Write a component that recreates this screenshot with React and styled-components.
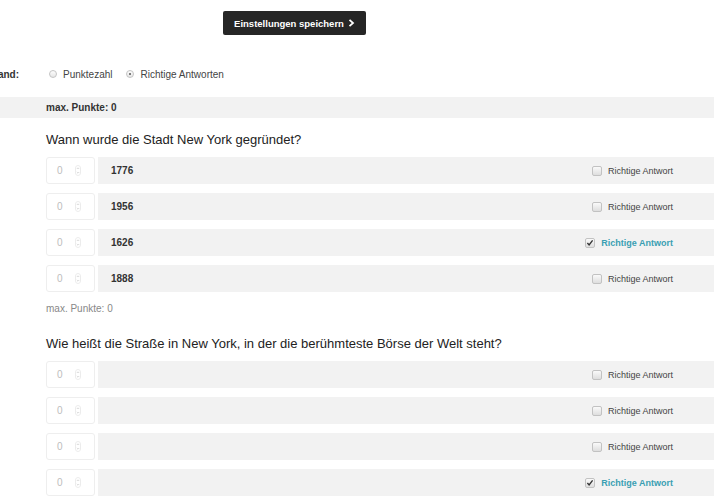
import React from "react";
import styled, { createGlobalStyle } from "styled-components";

const GlobalStyle = createGlobalStyle`
  body {
    margin: 0;
    background: #fff;
    font-family: "Liberation Sans", Arial, sans-serif;
    color: #333;
    overflow: hidden;
  }
`;

const questions = [
  {
    title: "Wann wurde die Stadt New York gegründet?",
    answers: [
      { text: "1776", correct: false },
      { text: "1956", correct: false },
      { text: "1626", correct: true },
      { text: "1888", correct: false },
    ],
  },
  {
    title: "Wie heißt die Straße in New York, in der die berühmteste Börse der Welt steht?",
    answers: [
      { text: "", correct: false },
      { text: "", correct: false },
      { text: "", correct: false },
      { text: "", correct: true },
    ],
  },
];

const Page = styled.div`
  width: 720px;
  height: 500px;
  padding-right: 6px;
  box-sizing: border-box;
  display: flex;
  flex-direction: column;
`;

const Toolbar = styled.div`
  padding: 11px 0 0 223px;
  display: flex;
`;

const SaveButton = styled.button`
  height: 24px;
  width: 143px;
  border: none;
  border-radius: 2px;
  background: #262626;
  color: #fff;
  font-family: "Liberation Sans", Arial, sans-serif;
  font-size: 9.5px;
  font-weight: bold;
  display: flex;
  align-items: center;
  justify-content: center;
  gap: 4px;
  padding: 0;
  cursor: pointer;
`;

const FieldRow = styled.div`
  margin-top: 29px;
  height: 20px;
  display: grid;
  grid-template-columns: 46px 1fr;
  align-items: center;
`;

// label column is cut by the left edge, as in the screenshot
const FieldLabel = styled.div`
  width: 19px;
  display: flex;
  justify-content: flex-end;
  font-size: 10px;
  font-weight: bold;
  color: #333;
  white-space: nowrap;
`;

const RadioGroup = styled.div`
  display: flex;
  align-items: center;
  padding-left: 3px;
  font-size: 10px;
  color: #444;
`;

const RadioOption = styled.label`
  display: flex;
  align-items: center;
  gap: 6px;
  margin-right: 14px;
`;

const RadioDot = styled.span`
  width: 6px;
  height: 6px;
  border-radius: 50%;
  border: 1px solid #c4c4c4;
  background: linear-gradient(#fdfdfd, #e6e6e6);
  display: flex;
  align-items: center;
  justify-content: center;

  &::after {
    content: "";
    width: 2px;
    height: 2px;
    border-radius: 50%;
    background: ${({ $checked }) => ($checked ? "#555" : "transparent")};
  }
`;

const PointsBar = styled.div`
  margin-top: 13px;
  height: 21px;
  background: #f2f2f2;
  padding-left: 46px;
  display: flex;
  align-items: center;
  font-size: 10px;
  font-weight: bold;
  color: #333;
`;

const Question = styled.section`
  padding-left: 46px;
  margin-top: ${({ $top }) => $top}px;
`;

const QuestionTitle = styled.h3`
  margin: 0 0 8px;
  height: 18px;
  line-height: 18px;
  font-size: 13px;
  font-weight: normal;
  color: #222;
  white-space: nowrap;
`;

const Answers = styled.div`
  display: flex;
  flex-direction: column;
  gap: 9px;
`;

const AnswerRow = styled.div`
  display: grid;
  grid-template-columns: 49px 1fr;
  gap: 3px;
  height: 27px;
`;

const PointsInput = styled.div`
  border: 1px solid #eeeeee;
  border-radius: 3px;
  display: flex;
  align-items: center;
  padding-left: 10px;
  gap: 12px;
  font-size: 10px;
  color: #bdbdbd;
`;

const AnswerField = styled.div`
  background: #f2f2f2;
  display: flex;
  align-items: center;
  justify-content: space-between;
  padding: 0 41px 0 13px;
  font-size: 10px;
  font-weight: bold;
  color: #333;
`;

const CorrectLabel = styled.label`
  display: flex;
  align-items: center;
  gap: 6px;
  font-size: 9px;
  font-weight: ${({ $checked }) => ($checked ? "bold" : "normal")};
  color: ${({ $checked }) => ($checked ? "#3a9fb3" : "#444")};
`;

const CheckBox = styled.span`
  width: 8px;
  height: 8px;
  border: 1px solid #c2c2c2;
  border-radius: 2px;
  background: linear-gradient(#fafafa, #dedede);
  display: flex;
  align-items: center;
  justify-content: center;
`;

const Hint = styled.div`
  margin-top: 10px;
  height: 14px;
  line-height: 14px;
  font-size: 10px;
  color: #888;
`;

const Spinner = () => (
  <svg width="6" height="11" viewBox="0 0 6 11">
    <rect x="0.5" y="0.5" width="5" height="10" rx="2.5" fill="none" stroke="#ececec" />
    <path d="M1.8 4 L3 2.8 L4.2 4" fill="none" stroke="#c8c8c8" strokeWidth="0.7" />
    <path d="M1.8 7 L3 8.2 L4.2 7" fill="none" stroke="#c8c8c8" strokeWidth="0.7" />
  </svg>
);

const Check = () => (
  <svg width="8" height="8" viewBox="0 0 8 8">
    <path d="M1.4 4.1 L3.1 5.9 L6.6 1.4" fill="none" stroke="#333" strokeWidth="1.4" />
  </svg>
);

const QuestionBlock = ({ question, top, children }) => (
  <Question $top={top}>
    <QuestionTitle>{question.title}</QuestionTitle>
    <Answers>
      {question.answers.map((a, i) => (
        <AnswerRow key={i}>
          <PointsInput>
            <span>0</span>
            <Spinner />
          </PointsInput>
          <AnswerField>
            <span>{a.text}</span>
            <CorrectLabel $checked={a.correct}>
              <CheckBox>{a.correct && <Check />}</CheckBox>
              Richtige Antwort
            </CorrectLabel>
          </AnswerField>
        </AnswerRow>
      ))}
    </Answers>
    {children}
  </Question>
);

const App = () => {
  return (
    <>
      <GlobalStyle />
      <Page>
        <Toolbar>
          <SaveButton>
            Einstellungen speichern
            <svg width="7" height="8" viewBox="0 0 7 8">
              <path d="M1.5 0.8 L5 4 L1.5 7.2" fill="none" stroke="#fff" strokeWidth="1.8" />
            </svg>
          </SaveButton>
        </Toolbar>

        <FieldRow>
          <FieldLabel>
            <span>Auswertung anhand:</span>
          </FieldLabel>
          <RadioGroup>
            <RadioOption>
              <RadioDot />
              Punktezahl
            </RadioOption>
            <RadioOption>
              <RadioDot $checked />
              Richtige Antworten
            </RadioOption>
          </RadioGroup>
        </FieldRow>

        <PointsBar>max. Punkte: 0</PointsBar>

        <QuestionBlock question={questions[0]} top={13}>
          <Hint>max. Punkte: 0</Hint>
        </QuestionBlock>
        <QuestionBlock question={questions[1]} top={19} />
      </Page>
    </>
  );
};

export default App;
